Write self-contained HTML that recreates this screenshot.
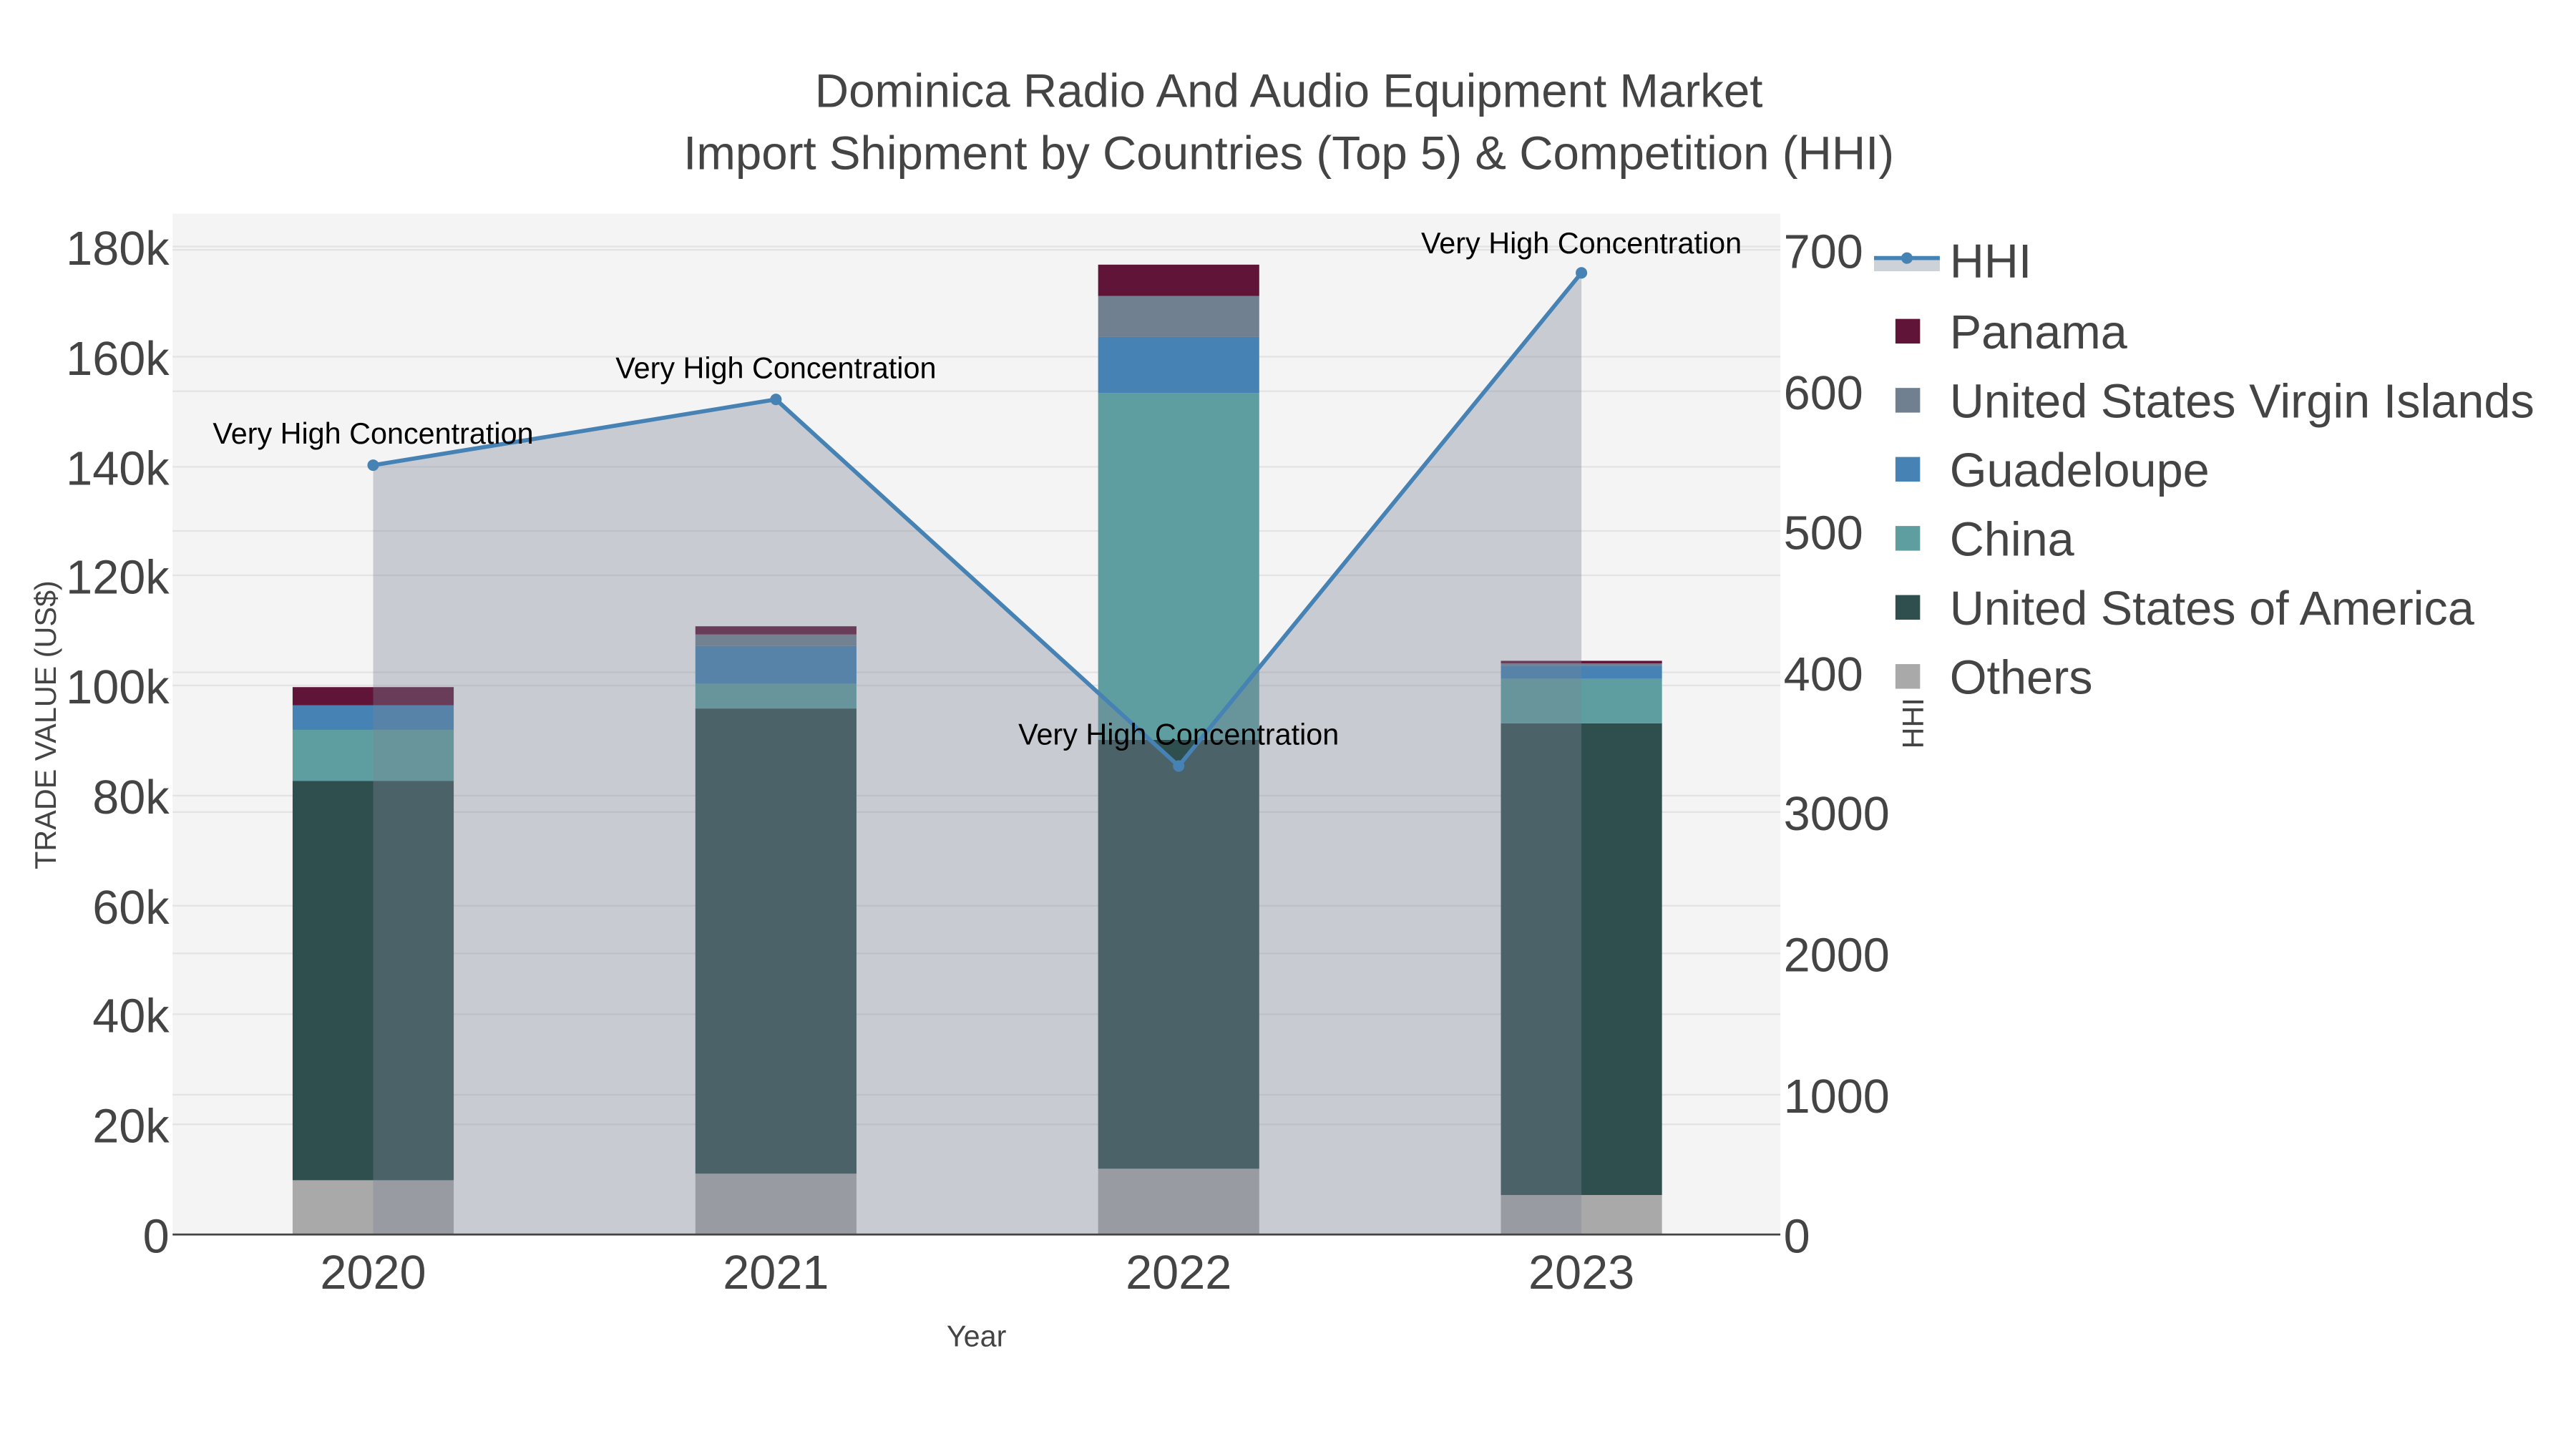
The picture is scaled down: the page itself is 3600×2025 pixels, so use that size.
<!DOCTYPE html>
<html><head><meta charset="utf-8"><style>
html,body{margin:0;padding:0;background:#fff;}
svg{display:block;font-family:"Liberation Sans",sans-serif;}
</style></head><body>
<svg width="3600" height="2025" viewBox="0 0 1567 881.5" preserveAspectRatio="none" xmlns="http://www.w3.org/2000/svg">
<rect x="0" y="0" width="1567" height="881.5" fill="#fff"/>
<rect x="105" y="130" width="978" height="621" fill="#f4f4f4"/>
<g stroke="#e3e3e3" stroke-width="1">
<line x1="105" x2="1083" y1="150" y2="150"/><line x1="105" x2="1083" y1="217" y2="217"/>
<line x1="105" x2="1083" y1="284" y2="284"/><line x1="105" x2="1083" y1="350" y2="350"/>
<line x1="105" x2="1083" y1="417" y2="417"/><line x1="105" x2="1083" y1="484" y2="484"/>
<line x1="105" x2="1083" y1="551" y2="551"/><line x1="105" x2="1083" y1="617" y2="617"/>
<line x1="105" x2="1083" y1="684" y2="684"/>
<line x1="105" x2="1083" y1="152" y2="152"/><line x1="105" x2="1083" y1="238" y2="238"/>
<line x1="105" x2="1083" y1="323" y2="323"/><line x1="105" x2="1083" y1="409" y2="409"/>
<line x1="105" x2="1083" y1="494" y2="494"/><line x1="105" x2="1083" y1="580" y2="580"/>
<line x1="105" x2="1083" y1="666" y2="666"/>
</g>
<g>
<rect x="178" y="718" width="98" height="33" fill="#a9a9a9"/>
<rect x="178" y="475" width="98" height="243" fill="#2f4f4f"/>
<rect x="178" y="444" width="98" height="31" fill="#5f9ea0"/>
<rect x="178" y="429" width="98" height="15" fill="#4682b4"/>
<rect x="178" y="418" width="98" height="11" fill="#601437"/>

<rect x="423" y="714" width="98" height="37" fill="#a9a9a9"/>
<rect x="423" y="431" width="98" height="283" fill="#2f4f4f"/>
<rect x="423" y="416" width="98" height="15" fill="#5f9ea0"/>
<rect x="423" y="393" width="98" height="23" fill="#4682b4"/>
<rect x="423" y="386" width="98" height="7" fill="#708090"/>
<rect x="423" y="381" width="98" height="5" fill="#601437"/>

<rect x="668" y="711" width="98" height="40" fill="#a9a9a9"/>
<rect x="668" y="450" width="98" height="261" fill="#2f4f4f"/>
<rect x="668" y="239" width="98" height="211" fill="#5f9ea0"/>
<rect x="668" y="205" width="98" height="34" fill="#4682b4"/>
<rect x="668" y="180" width="98" height="25" fill="#708090"/>
<rect x="668" y="161" width="98" height="19" fill="#601437"/>

<rect x="913" y="727" width="98" height="24" fill="#a9a9a9"/>
<rect x="913" y="440" width="98" height="287" fill="#2f4f4f"/>
<rect x="913" y="413" width="98" height="27" fill="#5f9ea0"/>
<rect x="913" y="405" width="98" height="8" fill="#4682b4"/>
<rect x="913" y="403" width="98" height="2" fill="#708090"/>
<rect x="913" y="402" width="98" height="1.5" fill="#601437"/>
</g>
<polygon points="227,283 472,243 717,466 962,166 962,751 227,751" fill="rgba(122,132,150,0.36)"/>
<polyline points="227,283 472,243 717,466 962,166" fill="none" stroke="#4682b4" stroke-width="2.5"/>
<g fill="#4682b4"><circle cx="227" cy="283" r="3.5"/><circle cx="472" cy="243" r="3.5"/><circle cx="717" cy="466" r="3.5"/><circle cx="962" cy="166" r="3.5"/></g>
<line x1="105" x2="1083" y1="751" y2="751" stroke="#444" stroke-width="1.2"/>
<g font-size="18" fill="#000" text-anchor="middle">
<text x="227" y="270">Very High Concentration</text>
<text x="472" y="230">Very High Concentration</text>
<text x="717" y="453">Very High Concentration</text>
<text x="962" y="154">Very High Concentration</text>
</g>
<g font-size="29" fill="#444" text-anchor="end">
<text x="103" y="161">180k</text><text x="103" y="228">160k</text><text x="103" y="295">140k</text>
<text x="103" y="361">120k</text><text x="103" y="428">100k</text><text x="103" y="495">80k</text>
<text x="103" y="562">60k</text><text x="103" y="628">40k</text><text x="103" y="695">20k</text>
<text x="103" y="762">0</text>
</g>
<g font-size="29" fill="#444" text-anchor="start">
<text x="1085" y="163">700</text><text x="1085" y="249">600</text><text x="1085" y="334">500</text>
<text x="1085" y="420">400</text><text x="1085" y="505">3000</text><text x="1085" y="591">2000</text>
<text x="1085" y="677">1000</text><text x="1085" y="762">0</text>
</g>
<g font-size="29" fill="#444" text-anchor="middle">
<text x="227" y="784">2020</text><text x="472" y="784">2021</text><text x="717" y="784">2022</text><text x="962" y="784">2023</text>
</g>
<text x="594" y="819" font-size="18" fill="#444" text-anchor="middle">Year</text>
<text transform="translate(34,441) rotate(-90)" font-size="18" fill="#444" text-anchor="middle">TRADE VALUE (US$)</text>
<text transform="translate(1170,440) rotate(-90)" font-size="18" fill="#444" text-anchor="middle">HHI</text>
<g font-size="28.5" fill="#444" text-anchor="middle">
<text x="784" y="65">Dominica Radio And Audio Equipment Market</text>
<text x="784" y="103">Import Shipment by Countries (Top 5) &amp; Competition (HHI)</text>
</g>
<rect x="1140" y="158" width="40" height="7" fill="#cdd1d8"/>
<line x1="1140" x2="1180" y1="157" y2="157" stroke="#4682b4" stroke-width="2.5"/>
<circle cx="1160" cy="157" r="3.5" fill="#4682b4"/>
<rect x="1153" y="194" width="15" height="15" fill="#601437"/>
<rect x="1153" y="236" width="15" height="15" fill="#708090"/>
<rect x="1153" y="278" width="15" height="15" fill="#4682b4"/>
<rect x="1153" y="320" width="15" height="15" fill="#5f9ea0"/>
<rect x="1153" y="362" width="15" height="15" fill="#2f4f4f"/>
<rect x="1153" y="404" width="15" height="15" fill="#a9a9a9"/>
<g font-size="29" fill="#444">
<text x="1186" y="169">HHI</text>
<text x="1186" y="212">Panama</text>
<text x="1186" y="254">United States Virgin Islands</text>
<text x="1186" y="296">Guadeloupe</text>
<text x="1186" y="338">China</text>
<text x="1186" y="380">United States of America</text>
<text x="1186" y="422">Others</text>
</g>
</svg>
</body></html>
